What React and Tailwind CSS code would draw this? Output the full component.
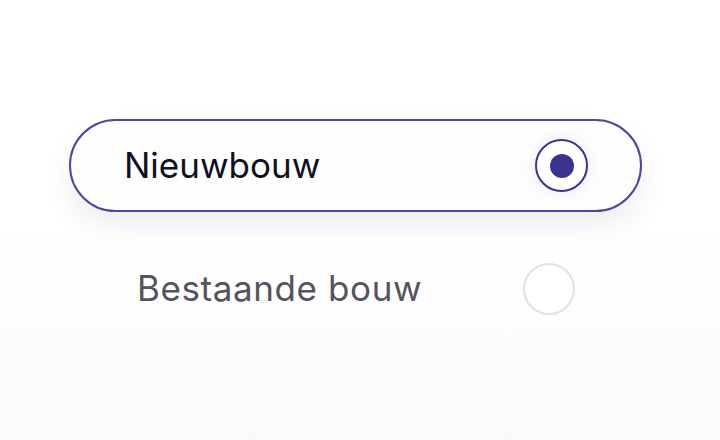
export default function App() {
  const font = { fontFamily: "Inter, 'Noto Sans', sans-serif" };
  return (
    <div
      className="w-[720px] h-[440px] bg-gradient-to-b from-white via-white to-[#fafafc] flex flex-col items-start pl-[69px] pt-[119px]"
      style={font}
    >
      <div className="w-[573px] h-[93px] rounded-full border-2 border-[#4f479e] bg-[#fdfdfe] shadow-[0_14px_30px_rgba(20,20,40,0.07)] flex items-center justify-between pl-[53px] pr-[52px]">
        <span className="text-[35px] font-normal text-[#10101e] tracking-[0px] leading-none">Nieuwbouw</span>
        <span className="w-[53px] h-[53px] rounded-full border-2 border-[#3b3390] bg-white flex items-center justify-center shadow-[0_0_14px_rgba(90,80,210,0.12)]">
          <span className="w-[24px] h-[24px] rounded-full bg-[#3b3390]" />
        </span>
      </div>
      <div className="w-[573px] h-[91px] mt-[31px] flex items-center justify-between pl-[68px] pr-[67px]">
        <span className="text-[35px] font-normal text-[#54545e] tracking-[0.6px] leading-none">Bestaande bouw</span>
        <span className="w-[52px] h-[52px] rounded-full border-2 border-[#e1dff0] bg-white" />
      </div>
    </div>
  );
}
